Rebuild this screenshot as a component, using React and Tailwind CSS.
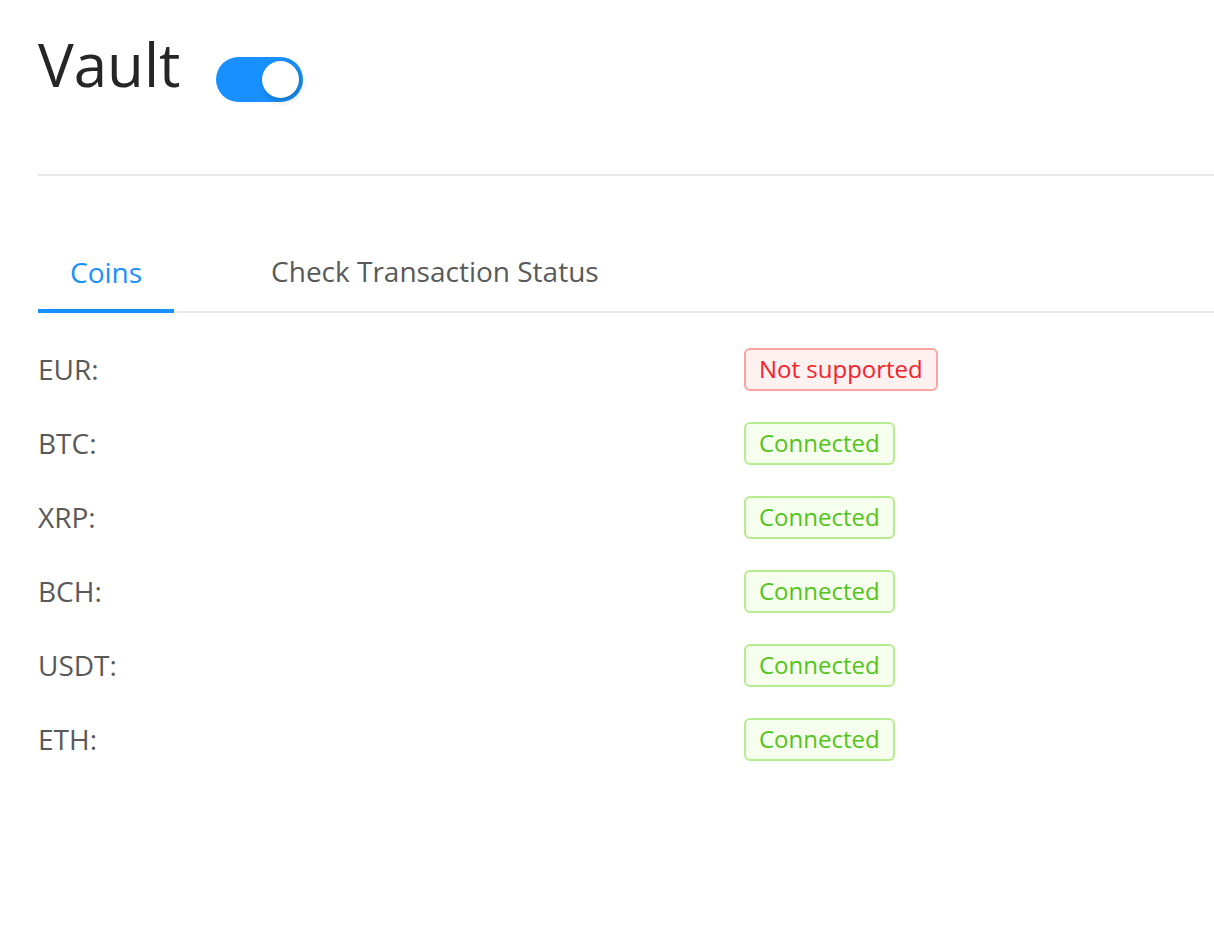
const coins = [
  { code: "EUR", ok: false },
  { code: "BTC", ok: true },
  { code: "XRP", ok: true },
  { code: "BCH", ok: true },
  { code: "USDT", ok: true },
  { code: "ETH", ok: true },
];

function Toggle() {
  return (
    <div className="mt-[23px] ml-[36px] flex h-[45px] w-[87px] items-center justify-end rounded-full bg-[#1890ff] px-[4px]">
      <div className="h-[37px] w-[37px] rounded-full bg-white shadow-[2px_3px_6px_rgba(0,35,11,0.25)]" />
    </div>
  );
}

function StatusTag({ ok }) {
  if (!ok) {
    return (
      <span className="inline-flex h-[43px] items-center rounded-[6px] border-2 border-[#ffa39e] bg-[#fff1f0] px-[13px] text-[24px] text-[#f5222d]">
        Not supported
      </span>
    );
  }
  return (
    <span className="inline-flex h-[43px] items-center rounded-[6px] border-2 border-[#b7eb8f] bg-[#f6ffed] px-[13px] text-[24px] text-[#52c41a]">
      Connected
    </span>
  );
}

export default function App() {
  return (
    <div className="min-h-screen bg-white pl-[38px] font-['Open_Sans',sans-serif]">
      {/* header */}
      <div className="flex items-start pt-[34px]">
        <h1 className="text-[60px] leading-[60px] font-normal text-[#262626]">Vault</h1>
        <Toggle />
      </div>

      <div className="mt-[72px] h-[2px] bg-[#e8e8e8]" />

      {/* tabs */}
      <div className="mt-[63px] flex border-b-2 border-[#e8e8e8]">
        <button className="-mb-[2px] border-b-[4px] border-[#1890ff] px-[32px] pt-[16px] pb-[20px] text-[28px] leading-[32px] text-[#1890ff]">
          Coins
        </button>
        <button className="ml-[65px] px-[32px] pt-[16px] pb-[24px] text-[28px] leading-[32px] text-[#595959]">
          Check Transaction Status
        </button>
      </div>

      {/* coin list */}
      <div className="mt-[19px]">
        {coins.map((c) => (
          <div key={c.code} className="flex h-[74px] items-center">
            <div className="w-[706px] text-[28px] text-[#595959]">{c.code}:</div>
            <StatusTag ok={c.ok} />
          </div>
        ))}
      </div>
    </div>
  );
}
